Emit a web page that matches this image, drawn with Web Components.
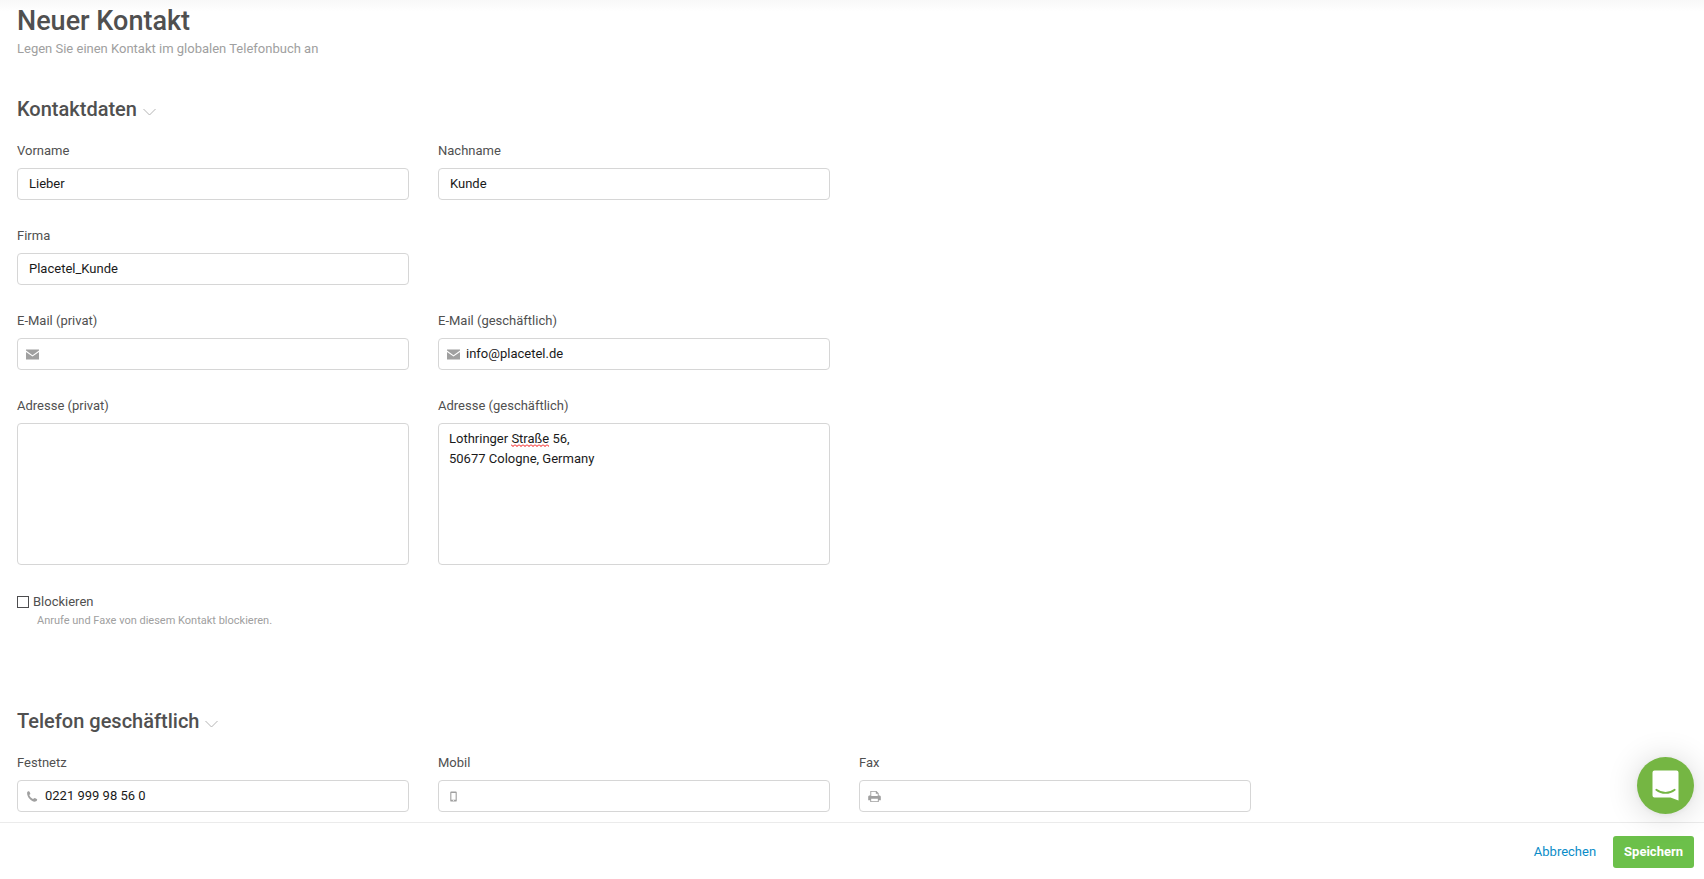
<!DOCTYPE html>
<html lang="de">
<head>
<meta charset="utf-8">
<meta name="viewport" content="width=device-width, initial-scale=1">
<title>Neuer Kontakt</title>
<style>
  body {
    margin: 0;
    background: #fff;
    color: #505050;
    font-family: Roboto, "Liberation Sans", sans-serif;
    font-size: 13px;
    line-height: 18px;
    --color-muted: #a0a0a0;
    --color-border: #d6d6d6;
    --color-input: #1a1a1a;
  }
</style>
</head>
<body>

<contact-page>
  <form-section heading="Kontaktdaten">
    <text-field label="Vorname" value="Lieber"></text-field>
    <text-field label="Nachname" value="Kunde"></text-field>
    <text-field class="new-row" label="Firma" value="Placetel_Kunde"></text-field>
    <text-field class="new-row" label="E-Mail (privat)" type="email" icon="mail"></text-field>
    <text-field label="E-Mail (geschäftlich)" type="email" icon="mail" value="info@placetel.de"></text-field>
    <text-area-field class="new-row" label="Adresse (privat)"></text-area-field>
    <text-area-field label="Adresse (geschäftlich)" value="Lothringer Straße 56,&#10;50677 Cologne, Germany" misspelled="Straße"></text-area-field>
    <check-field class="new-row" label="Blockieren">Anrufe und Faxe von diesem Kontakt blockieren.</check-field>
  </form-section>

  <form-section heading="Telefon geschäftlich">
    <text-field label="Festnetz" type="tel" icon="phone" value="0221 999 98 56 0"></text-field>
    <text-field label="Mobil" type="tel" icon="mobile"></text-field>
    <text-field label="Fax" type="tel" icon="fax"></text-field>
  </form-section>

  <action-bar slot="footer"></action-bar>
</contact-page>

<chat-launcher></chat-launcher>

<script>
  // Field icons, 14x14 grid
  const ICONS = {
    mail: `<path d="M0 1.6h14v1.2L7 7.8 0 2.8zM0 4.2l7 5 7-5v8.2H0z"/>`,
    phone: `<path d="M1.2 2.7c.3-1 1.5-1.5 2.3-1.2.5.7 1 1.6 1.2 2.5 0 .6-1.2 1-1.1 1.6.8 1.7 2.2 3.2 3.9 4 .6.1 1.1-1.1 1.7-1.1.9.3 2.3.9 2.8 1.4.2 1-.6 2.3-2 2.6C5.7 13 .6 7.2 1.2 2.7z"/>`,
    mobile: `<path fill-rule="evenodd" d="M4.500 1.500h5c.6 0 1 .4 1 1v9c0 .6-.4 1-1 1h-5c-.6 0-1-.4-1-1v-9c0-.6.4-1 1-1zm.2 1.600v7.300h4.600V3.100zM6.400 11v.8h1.200V11z"/>`,
    fax: `<path fill-rule="evenodd" d="M2.5 1h6.600l2.400 2.400V6h.8c.9 0 1.500.6 1.500 1.500V11h-2.200v2H2.400v-2H.2V7.500C.2 6.600.8 6 1.700 6h.8zm1 1v4.500h7V4H8.400V2zm-.1 7.500V12h7.200V9.500z"/>`
  };

  // Page shell: title block, sections, sticky footer
  class ContactPage extends HTMLElement {
    constructor() {
      super();
      this.attachShadow({ mode: "open" });
    }

    connectedCallback() {
      this.shadowRoot.innerHTML = `
        <style>
          :host {
            display: flex;
            flex-direction: column;
            min-height: 100vh;
            background: linear-gradient(#f8f8f8, #fff 12px);
          }

          main {
            flex: 1;
            display: flex;
            flex-direction: column;
            padding: 4px 32px 0 17px;
          }

          header {
            margin-bottom: 36px;
          }

          h1 {
            margin: 0;
            font-size: 27px;
            font-weight: 500;
            line-height: 34px;
          }

          p {
            margin: 0;
            line-height: 22px;
            color: var(--color-muted);
          }

          .sections {
            display: flex;
            flex-direction: column;
            gap: 78px;
          }

          slot[name="footer"] {
            display: contents;
          }
        </style>
        <main>
          <header>
            <h1>Neuer Kontakt</h1>
            <p>Legen Sie einen Kontakt im globalen Telefonbuch an</p>
          </header>
          <div class="sections"><slot></slot></div>
        </main>
        <slot name="footer"></slot>
      `;
    }
  }

  class FormSection extends HTMLElement {
    constructor() {
      super();
      this.attachShadow({ mode: "open" });
    }

    connectedCallback() {
      this.shadowRoot.innerHTML = `
        <style>
          :host {
            display: block;
          }

          h2 {
            display: flex;
            align-items: center;
            gap: 6px;
            margin: 0 0 20px;
            font-size: 20px;
            font-weight: 500;
            line-height: 26px;
          }

          svg {
            width: 13px;
            height: 14px;
            fill: none;
            stroke: #b4b4b4;
          }

          .grid {
            display: grid;
            grid-template-columns: repeat(4, minmax(0, 1fr));
            gap: 27px 29px;
          }

          ::slotted(.new-row) {
            grid-column-start: 1;
          }
        </style>
        <section>
          <h2>
            <span>${this.getAttribute("heading")}</span>
            <svg viewBox="0 0 13 14" aria-hidden="true"><path d="M.5 7l6 6 6-6"/></svg>
          </h2>
          <div class="grid"><slot></slot></div>
        </section>
      `;
    }
  }

  // Single line input with optional icon
  class TextField extends HTMLElement {
    constructor() {
      super();
      this.attachShadow({ mode: "open" });
    }

    connectedCallback() {
      const icon = this.getAttribute("icon");
      const type = this.getAttribute("type") || "text";

      this.shadowRoot.innerHTML = `
        <style>
          :host {
            display: block;
          }

          label {
            display: block;
            margin-bottom: 8px;
          }

          .box {
            display: flex;
            align-items: center;
            gap: 6px;
            box-sizing: border-box;
            height: 32px;
            padding: 0 8px 0 11px;
            border: 1px solid var(--color-border);
            border-radius: 4px;
            background: #fff;
          }

          .box.with-icon {
            padding-left: 8px;
          }

          .box:focus-within {
            border-color: #0a8cc8;
          }

          svg {
            flex: none;
            width: 13px;
            height: 13px;
            fill: var(--color-muted);
          }

          input {
            flex: 1;
            min-width: 0;
            padding: 0;
            border: 0;
            outline: 0;
            background: none;
            font: inherit;
            color: var(--color-input);
          }
        </style>
        <label for="input">${this.getAttribute("label")}</label>
        <div class="box ${icon ? "with-icon" : ""}">
          ${icon ? `<svg viewBox="0 0 14 14" aria-hidden="true">${ICONS[icon]}</svg>` : ""}
          <input id="input" type="${type}">
        </div>
      `;
      this.shadowRoot.getElementById("input").value = this.getAttribute("value") || "";
    }
  }

  // Multi line input, marks one misspelled word on its first line
  class TextAreaField extends HTMLElement {
    constructor() {
      super();
      this.attachShadow({ mode: "open" });
    }

    connectedCallback() {
      this.shadowRoot.innerHTML = `
        <style>
          :host {
            display: block;
          }

          label {
            display: block;
            margin-bottom: 8px;
          }

          .box {
            position: relative;
          }

          textarea {
            display: block;
            box-sizing: border-box;
            width: 100%;
            height: 142px;
            padding: 5px 10px;
            border: 1px solid var(--color-border);
            border-radius: 4px;
            outline: 0;
            resize: none;
            background: #fff;
            font: inherit;
            line-height: 20px;
            color: var(--color-input);
          }

          textarea:focus {
            border-color: #0a8cc8;
          }

          svg {
            position: absolute;
            top: 21px;
            height: 3px;
            pointer-events: none;
          }
        </style>
        <label for="input">${this.getAttribute("label")}</label>
        <div class="box">
          <textarea id="input" spellcheck="false"></textarea>
        </div>
      `;
      const input = this.shadowRoot.getElementById("input");
      input.value = this.getAttribute("value") || "";
      this.markWord(input, this.getAttribute("misspelled"));
    }

    markWord(input, word) {
      if (!word) return;

      const style = getComputedStyle(input);
      const ctx = document.createElement("canvas").getContext("2d");
      ctx.font = `${style.fontSize} ${style.fontFamily}`;

      const before = input.value.slice(0, input.value.indexOf(word));
      const left = Math.round(ctx.measureText(before).width) + 11;
      const width = Math.round(ctx.measureText(word).width);

      input.insertAdjacentHTML("afterend", `
        <svg style="left: ${left}px" width="${width}" height="3" aria-hidden="true">
          <defs>
            <pattern id="wave" width="4" height="3" patternUnits="userSpaceOnUse">
              <path d="M0 .5l2 2 2-2" fill="none" stroke="#f00000"/>
            </pattern>
          </defs>
          <rect width="100%" height="3" fill="url(#wave)"/>
        </svg>
      `);
    }
  }

  // Checkbox with a hint below it
  class CheckField extends HTMLElement {
    constructor() {
      super();
      this.attachShadow({ mode: "open" });
    }

    connectedCallback() {
      this.shadowRoot.innerHTML = `
        <style>
          :host {
            display: block;
          }

          label {
            display: flex;
            align-items: center;
            gap: 4px;
            line-height: 20px;
          }

          input {
            appearance: none;
            width: 12px;
            height: 12px;
            margin: 0;
            border: 1px solid #4d4d4f;
            background: #fff;
          }

          input:checked {
            background: #6cc04a;
          }

          p {
            margin: 0;
            padding-left: 20px;
            font-size: 11px;
            line-height: 18px;
            color: var(--color-muted);
          }
        </style>
        <label><input type="checkbox" aria-describedby="hint">${this.getAttribute("label")}</label>
        <p id="hint"><slot></slot></p>
      `;
    }
  }

  // Sticky footer with cancel and save
  class ActionBar extends HTMLElement {
    constructor() {
      super();
      this.attachShadow({ mode: "open" });
    }

    connectedCallback() {
      this.shadowRoot.innerHTML = `
        <style>
          :host {
            position: sticky;
            bottom: 0;
            display: flex;
            align-items: center;
            justify-content: flex-end;
            gap: 17px;
            padding: 13px 10px 11px;
            border-top: 1px solid #ebebeb;
            background: #fff;
          }

          a {
            color: #0a8cc8;
            text-decoration: none;
          }

          button {
            height: 32px;
            padding: 0 11px;
            border: 0;
            border-radius: 3px;
            background: #6cc04a;
            font: inherit;
            font-weight: 700;
            color: #fff;
            cursor: pointer;
          }
        </style>
        <a href="#">Abbrechen</a>
        <button type="submit">Speichern</button>
      `;
    }
  }

  // Round chat button floating above the footer
  class ChatLauncher extends HTMLElement {
    constructor() {
      super();
      this.attachShadow({ mode: "open" });
    }

    connectedCallback() {
      this.shadowRoot.innerHTML = `
        <style>
          :host {
            position: fixed;
            right: 10px;
            bottom: 65px;
            z-index: 10;
          }

          button {
            display: flex;
            align-items: center;
            justify-content: center;
            width: 57px;
            height: 57px;
            padding: 0;
            border: 0;
            border-radius: 50%;
            background: #75b643;
            box-shadow: 0 1px 6px rgba(0, 0, 0, 0.06), 0 2px 32px rgba(0, 0, 0, 0.16);
            cursor: pointer;
          }
        </style>
        <button type="button" aria-label="Chat öffnen">
          <svg width="27" height="31" viewBox="0 0 27 31" aria-hidden="true">
            <path d="M2.500.5h22a2 2 0 0 1 2 2v28l-8-3h-16a2 2 0 0 1-2-2v-23a2 2 0 0 1 2-2z" fill="#fff"/>
            <path d="M4.300 19.800c5.500 4.200 13 4.200 18.400 0" fill="none" stroke="#75b643" stroke-width="1.800" stroke-linecap="round"/>
          </svg>
        </button>
      `;
    }
  }

  customElements.define("contact-page", ContactPage);
  customElements.define("form-section", FormSection);
  customElements.define("text-field", TextField);
  customElements.define("text-area-field", TextAreaField);
  customElements.define("check-field", CheckField);
  customElements.define("action-bar", ActionBar);
  customElements.define("chat-launcher", ChatLauncher);
</script>
</body>
</html>
